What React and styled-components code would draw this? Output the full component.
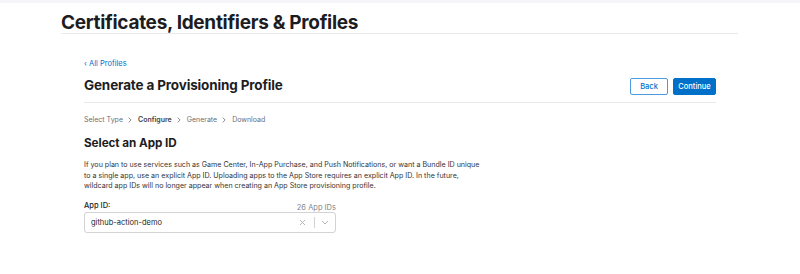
import React from "react";
import styled, { createGlobalStyle } from "styled-components";

const Global = createGlobalStyle`
  html, body { margin: 0; padding: 0; background: #fff; }
  body { font-family: Inter, "Noto Sans", "Liberation Sans", sans-serif; color: #1d1d1f; -webkit-font-smoothing: antialiased; }
  * { box-sizing: border-box; }
`;

const TopStrip = styled.div`
  height: 3px;
  background: #f5f5f7;
`;

const Header = styled.header`
  margin: 0 62px 0 61px;
  height: 31px;
  border-bottom: 1px solid #e8e8ed;
  display: flex;
  align-items: flex-end;
`;

const SiteTitle = styled.h1`
  margin: 0 0 -1px;
  font-size: 19px;
  font-weight: 700;
  letter-spacing: -0.3px;
  line-height: 22px;
  color: #1d1d1f;
`;

const Main = styled.main`
  margin: 0 84px;
  padding-top: 25px;
`;

const BackLink = styled.a`
  display: block;
  font-size: 7.5px;
  line-height: 10px;
  color: #0070c9;
  text-decoration: none;
`;

const TitleRow = styled.div`
  display: flex;
  align-items: center;
  justify-content: space-between;
  padding: 5px 0 7px;
  border-bottom: 1px solid #e8e8ed;
`;

const PageTitle = styled.h2`
  margin: 0;
  font-size: 13.5px;
  font-weight: 700;
  line-height: 18px;
  letter-spacing: -0.15px;
`;

const Buttons = styled.div`
  display: flex;
  gap: 5px;
  margin-top: 4px;
`;

const Button = styled.button`
  height: 17px;
  padding: 0;
  width: ${(p) => p.$w}px;
  border-radius: 2px;
  font-family: inherit;
  font-size: 7.5px;
  font-weight: 500;
  border: 1px solid ${(p) => (p.$primary ? "#0070c9" : "#4b9be0")};
  background: ${(p) => (p.$primary ? "#0070c9" : "#fff")};
  color: ${(p) => (p.$primary ? "#fff" : "#0070c9")};
`;

const Steps = styled.ol`
  list-style: none;
  margin: 0;
  padding: 12px 0 0;
  display: flex;
  align-items: center;
  font-size: 7px;
  line-height: 10px;
  color: #6e6e73;
`;

const Step = styled.li`
  display: flex;
  align-items: center;
  font-weight: ${(p) => (p.$active ? 600 : 400)};
  color: ${(p) => (p.$active ? "#424245" : "#6e6e73")};
`;

const Chevron = styled.span`
  display: flex;
  margin: 0 6px 0 5px;
  color: #6e6e73;
`;

const SectionTitle = styled.h3`
  margin: 10px 0 0;
  font-size: 11.7px;
  line-height: 16px;
  font-weight: 700;
  letter-spacing: -0.05px;
`;

const Paragraph = styled.p`
  margin: 9px 0 0;
  width: 400px;
  font-size: 7.1px;
  line-height: 10.5px;
  color: #333336;
`;

const Field = styled.div`
  width: 252px;
  margin-top: 9px;
`;

const FieldHead = styled.div`
  display: flex;
  justify-content: space-between;
  align-items: flex-end;
  height: 11px;
`;

const Label = styled.label`
  font-size: 7.5px;
  line-height: 9px;
  font-weight: 500;
  color: #1d1d1f;
  align-self: flex-start;
`;

const Count = styled.span`
  font-size: 7.5px;
  line-height: 9px;
  color: #86868b;
`;

const Select = styled.div`
  height: 21px;
  border: 1px solid #d2d2d7;
  border-radius: 3px;
  display: flex;
  align-items: center;
  padding-left: 6px;
  font-size: 7.5px;
  color: #1d1d1f;
`;

const Value = styled.span`
  flex: 1;
`;

const Indicator = styled.span`
  display: flex;
  align-items: center;
  justify-content: center;
  width: ${(p) => p.$w}px;
  height: 100%;
  color: #aeaeb2;
`;

const Divider = styled.span`
  width: 1px;
  height: 11px;
  background: #d2d2d7;
`;

const StepChevron = () => (
  <Chevron>
    <svg width="4" height="6" viewBox="0 0 4 6" fill="none" stroke="currentColor" strokeWidth="0.8">
      <path d="M0.7 0.6 L3.1 3 L0.7 5.4" />
    </svg>
  </Chevron>
);

export default function App() {
  return (
    <>
      <Global />
      <TopStrip />
      <Header>
        <SiteTitle>Certificates, Identifiers &amp; Profiles</SiteTitle>
      </Header>
      <Main>
        <BackLink href="#">‹ All Profiles</BackLink>
        <TitleRow>
          <PageTitle>Generate a Provisioning Profile</PageTitle>
          <Buttons>
            <Button $w={38}>Back</Button>
            <Button $w={43} $primary>Continue</Button>
          </Buttons>
        </TitleRow>
        <Steps>
          <Step>Select Type</Step>
          <Step $active><StepChevron />Configure</Step>
          <Step><StepChevron />Generate</Step>
          <Step><StepChevron />Download</Step>
        </Steps>
        <SectionTitle>Select an App ID</SectionTitle>
        <Paragraph>
          If you plan to use services such as Game Center, In-App Purchase, and Push Notifications, or want a Bundle ID unique to a single app, use an explicit App ID. Uploading apps to the App Store requires an explicit App ID. In the future, wildcard app IDs will no longer appear when creating an App Store provisioning profile.
        </Paragraph>
        <Field>
          <FieldHead>
            <Label>App ID:</Label>
            <Count>26 App IDs</Count>
          </FieldHead>
          <Select>
            <Value>github-action-demo</Value>
            <Indicator $w={24}>
              <svg width="7" height="7" viewBox="0 0 7 7" fill="none" stroke="currentColor" strokeWidth="0.9">
                <path d="M1 1 L6 6 M6 1 L1 6" />
              </svg>
            </Indicator>
            <Divider />
            <Indicator $w={20}>
              <svg width="8" height="5" viewBox="0 0 8 5" fill="none" stroke="currentColor" strokeWidth="0.9">
                <path d="M1 1 L4 4 L7 1" />
              </svg>
            </Indicator>
          </Select>
        </Field>
      </Main>
    </>
  );
}
